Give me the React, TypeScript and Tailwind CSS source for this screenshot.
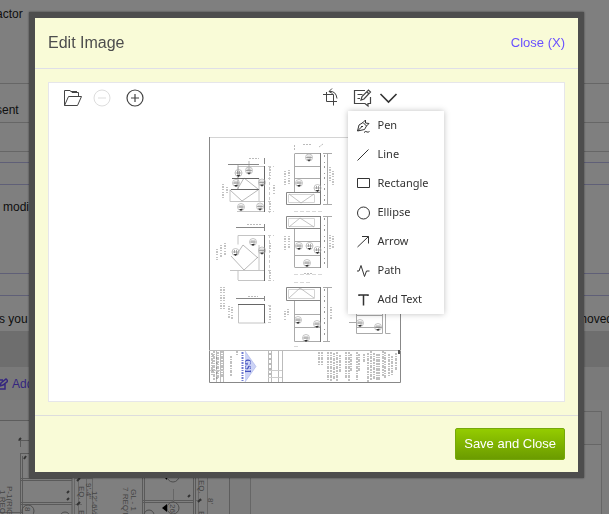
import type { ReactNode } from "react";

const Icon = ({children, size = 20, className = ""} : {children: ReactNode, size?: number, className?: string}) => {
    return (
        <svg width={size} height={size} viewBox={`0 0 ${size} ${size}`} fill="none" stroke="currentColor" strokeWidth="1" className={className} aria-hidden="true">
            {children}
        </svg>
    );
}

const tools = [
    {
        name: "Pen",
        icon: <path d="M2.500 13 4 7l4-2.500 3.500 3.500-2 3.500-7 1.500 4.500-4.500M8 4.500l2.500-2.500M11.500 8l2.500-2.500M10.500 2v3l3.500.5M6 8.500h2M9 14.500q2-2 3-.5 1 .5 2.500-.5" />,
    },
    {name: "Line", icon: <path d="M2.500 13.500l11-11" />},
    {name: "Rectangle", icon: <path d="M2.500 2.500h12v9h-12z" />},
    {name: "Ellipse", icon: <circle cx="8.500" cy="8" r="6" />},
    {name: "Arrow", icon: <path d="M2.500 13l11-10.500M7 2.500h6.500v7" />},
    {name: "Path", icon: <path d="M2 8h2l2-5.500 3.500 11 2-5.500h3" />},
    {name: "Add Text", icon: <path d="M4 4V3h9v1M8.500 3v10.500" strokeWidth="1.5" />},
];

const circles = [
    [40, 33.5], [29.5, 36], [27, 46], [53, 45.5], [32, 70], [51, 69.5],
    [44, 105], [26.5, 115], [53, 113.5],
    [100, 20.5], [90, 46], [108.5, 51], [90, 109], [100.5, 109], [108.5, 113],
    [98, 126], [89, 183], [108, 187], [97, 201], [151, 186], [169, 190],
];

// x, y1, y2 of every run of small sideways notes
const notes = [
    [14, 47, 61], [18, 50, 58], [65, 48, 58], [61, 30, 40], [61, 64, 75],
    [8, 112, 123], [12, 108, 121], [16, 106, 118], [61, 106, 116], [61, 133, 144],
    [12, 150, 173], [15, 150, 172], [20, 169, 182], [23, 170, 182], [61, 169, 185],
    [76, 34, 48], [80, 33, 48], [76, 99, 113], [80, 99, 112], [76, 174, 184], [79, 172, 180],
    [121, 30, 46], [124, 34, 48], [121, 98, 114], [124, 99, 111], [122, 170, 182],
];

const titleNotes = [
    [3, 216, 238], [5, 214, 244], [9, 215, 242], [13, 214, 240], [22, 219, 240], [28, 214, 218],
    [110, 215, 229], [113, 215, 228], [119, 215, 243], [122, 215, 245], [125, 216, 243], [128, 215, 245],
    [131, 218, 235], [137, 215, 242], [140, 215, 244], [142, 217, 235], [148, 215, 243], [150, 217, 234],
    [155, 217, 226], [159, 216, 245], [162, 214, 244], [165, 216, 243], [168, 217, 243], [170, 217, 243],
    [174, 214, 239], [176, 215, 242], [180, 217, 240], [183, 219, 238], [187, 216, 234],
];

const Drawing = () => {
    return (
        <svg width="192" height="246" viewBox="0 0 192 246" fill="none" role="img" aria-label="Shop drawing">
            <rect width="192" height="246" fill="#fff" />
            <path d="M0 .5h192" stroke="#d4d4d4" />
            <path d="M.5 0v245.500h191V0" stroke="#888" />
            <path d="M0 213.500h192" stroke="#bbb" />
            {/* left elevations */}
            <g stroke="#c4c4c4">
                <path d="M29 29.500h27M29 29.500v12M28 74.500h28M21 64.500h35M21 52.500v12M50 41.500v23M29 98.500h27M29 98.500v9M29 143.500h27M29 133v10M50 108v25M21 133.500h35M29.500 168v18h27" />
                <path d="M21 53l12 11 16-11M28 53l7-12 14 11M22 119l13 14 14-13M28 117l6-9 15 13M40 33v-9M29 27v25" stroke="#999" strokeWidth=".7" />
            </g>
            <path d="M55.500 29v46M55.500 98v46M55.500 167v19M29 167.500h27M22 52.500h28M23 41.500h27" stroke="#666" />
            <path d="M19 27.500h31M27 90.500h29M27 161.500h29M55.500 21v6M55.500 87v7M55.500 159v5" stroke="#888" />
            <path d="M59 29.500h6M59 41.500h4M59 64.500h4M59 74.500h6M59 98.500h6M59 133.500h4M59 143.500h6M59 168.500h3M59 185.500h3M60.500 30v46M60.500 98v46" stroke="#ccc" strokeDasharray="3 2" />
            {/* centre elevations */}
            <g stroke="#aaa">
                <path d="M85.500 16.500h26M85.500 29.500h26M85.500 41.500h26M85.500 17v38M85.500 92v38M85.500 104.500h26M85.500 118.500h26M85.500 130.500h26M85.500 164v40.500h26M85.500 177.500h26M85.500 190.500h26" />
                <path d="M77.500 55.500h34v12h-34zM77.500 79.500h34v12h-34zM77.500 150.500h34v13h-34z" stroke="#888" />
                <path d="M79.500 57.500h26v8h-26zM79.500 81.500h26v8h-26zM79.500 152.500h26v9h-26z" stroke="#d4d4d4" />
                <path d="M80 57l12 9 13-9M80 90l11-9 14 9M80 161l11-10 14 10" strokeWidth=".7" />
            </g>
            <path d="M111.500 16v51M111.500 79v52M111.500 150v55" stroke="#777" />
            <path d="M118.500 16v51M118.500 79v52M118.500 150v55M114 16.500h9M114 67.500h9M114 79.500h9M114 150.500h9M114 204.500h7" stroke="#aaa" />
            <path d="M115.500 18v48M115.500 81v48M115.500 152v50" stroke="#999" strokeDasharray="2 5 1 3" />
            <path d="M94 7.500h8M110 10l4-3M40 21.500h10M38 87.500h14M39 159.500h10M95 136.500h9M85.500 8v5" stroke="#bbb" strokeDasharray="2 1" />
            <path d="M85 74.500h28M85 137.500h28M85 145.500h16M85 209.500h5" stroke="#d8d8d8" strokeDasharray="4 2" />
            {/* right elevation */}
            <path d="M147.500 120v76.500h26V120M176.500 120v76.500h5M147 178.500h26M140 185.500h8M147 190.500h26" stroke="#aaa" />
            {circles.map(([x, y]) => (
                <g key={`${x}-${y}`}>
                    <circle cx={x} cy={y} r="3.5" stroke="#aaa" strokeWidth=".7" />
                    <path d={`M${x - 3} ${y}h6M${x - 1} ${y - 2}v3M${x + 1} ${y - 2}v4`} stroke="#888" strokeWidth=".7" />
                    <path d={`M${x - 2} ${y + 2}h4l-2 2z`} fill="#333" />
                </g>
            ))}
            {notes.map(([x, y1, y2]) => (
                <path key={`${x}-${y1}`} d={`M${x} ${y1}V${y2}`} stroke="#c4c4c4" strokeWidth="2" strokeDasharray="1 1 2 1 1 2" />
            ))}
            {/* title block */}
            <path d="M7.500 214v31M11.500 214v31M14.500 214v31M59.500 214v31M62.500 214v31M69.500 214v31M73.500 214v31" stroke="#bbb" />
            <path d="M1 233.500h14M59 233.500h14M59 240.500h14" stroke="#ccc" />
            <path d="M4 218v18M8 220v22M61 216v24" stroke="#777" strokeDasharray="2 3" />
            <path d="M36 214l11 15.500L36 245z" fill="#ccd3f6" />
            <path d="M36 214l11 15.500L36 245" stroke="#a6b0e8" strokeWidth=".6" />
            <text transform="translate(36 222) rotate(90)" fill="#4452bd" className="font-['Liberation_Serif',serif] text-[8px] font-bold">GSI</text>
            <path d="M33.500 215v30" stroke="#6f7bd0" strokeWidth="2" strokeDasharray="2 1 1 1" />
            {titleNotes.map(([x, y1, y2]) => (
                <path key={`${x}-${y1}`} d={`M${x} ${y1}V${y2}`} stroke="#c0c0c0" strokeWidth="2" strokeDasharray="2 1 1 1 3 1" />
            ))}
            <path d="M190 213v4" stroke="#555" strokeWidth="2" />
        </svg>
    );
}

const Thumbnail = () => {
    return (
        <svg width="229" height="93" viewBox="0 0 229 93" fill="none" stroke="#ccc" className="font-['Liberation_Sans',sans-serif] text-[8px]" aria-hidden="true">
            <path d="M20.500 17v9M18 19.500h54M20 32.500h52v61M20.500 33v60M22.500 35v58M20 57.500h52M20 59.500h52M20 81.500h52M20 83.500h52M0 91.500h22M142.500 20v73M144.500 20v73M142 79.500h52M142 81.500h52M193.500 20v73M195.500 20v73" stroke="#b4b4b4" />
            <path d="M74.500 20v73M78.500 20v73M86.500 20v73M92.500 20v73M198.500 20v73M207.500 20v73M173.500 68v14M74 57.500h18M74 83.500h8M196 79.500h6" />
            <g stroke="#999">
                <circle cx="28" cy="90" r="6" />
                <circle cx="65" cy="96" r="5" />
                <circle cx="149" cy="94" r="5" />
                <circle cx="173" cy="55" r="6" />
                <circle cx="173" cy="87" r="6" />
            </g>
            <path d="M167 83v8l-5-4zM167 53v6l-4-4z" fill="#000" stroke="none" />
            <path d="M19 19l2-2M24 38l2-3M67 72l2-2M67 79l2-2M77 60l3-3M77 84l3-3M188 76l2-2M198 81l3-3" stroke="#666" strokeWidth="2" />
            <g fill="#8a8a8a" stroke="none">
                <text transform="translate(7 65) rotate(90)">P-1(RIGHT)</text>
                <text transform="translate(0 69) rotate(90)">1 REQ'D</text>
                <text transform="translate(131 68) rotate(90)">GL - 1</text>
                <text transform="translate(123 66) rotate(90)">7 REQ'D</text>
                <text transform="translate(79 65) rotate(90)">EQ.</text>
                <text transform="translate(79 89) rotate(90)">EQ.</text>
                <text transform="translate(86 62) rotate(90)">9'-4"</text>
                <text transform="translate(92 70) rotate(90)">12'-6½</text>
                <text transform="translate(199 59) rotate(90)">EQ.</text>
                <text transform="translate(199 90) rotate(90)">EQ.</text>
                <text transform="translate(208 77) rotate(90)">8'</text>
                <text transform="translate(170 83) rotate(90)">26</text>
                <text transform="translate(25 86) rotate(90)">8</text>
            </g>
        </svg>
    );
}

const Background = () => {
    return (
        <div className="flex h-screen flex-col overflow-hidden bg-white text-xs leading-4 whitespace-nowrap text-[#222]">
            <div className="-ml-1 h-[84px] shrink-0 border-b border-[#ccc] pt-1.5">actor</div>
            <div className="h-[39px] shrink-0 border-b border-[#ccc] pt-[18px]">
                <div className="-ml-1">sent</div>
            </div>
            <div className="h-[29px] shrink-0 border-b border-[#ccc]" />
            <div className="h-[11px] shrink-0 border-b border-[#bfbfee]" />
            <div className="h-[22px] shrink-0 border-b border-[#bfbfee]" />
            <div className="h-[89px] shrink-0 border-b border-[#bfbfee] pt-3.5 pl-[3px]">modif</div>
            <div className="h-[22px] shrink-0 border-b border-[#bfbfee]" />
            <div className="flex h-[35px] shrink-0 justify-between pt-[15px]">
                <span className="-ml-px">s you</span>
                <span className="-mr-1">moved</span>
            </div>
            <div className="h-9 shrink-0 bg-[#dcdcdc]" />
            <div className="h-[33px] shrink-0 bg-[#f4f4f4] pt-[9px]">
                <a href="#add" className="-ml-1 flex items-center gap-1 text-[#6a4dff]">
                    <Icon size={12}>
                        <path d="M7 2H1v9h8V6M4 8l1-3 5-4 2 2-5 4z" strokeWidth="1.5" />
                    </Icon>
                    Add
                </a>
            </div>
            <div className="flex min-h-0 flex-1 bg-[#f8f8f8]">
                <div className="flex w-[230px] flex-col pt-5">
                    <div className="flex-1 border-t border-r border-[#bbb] bg-white">
                        <Thumbnail />
                    </div>
                </div>
                <div className="mr-[7px] ml-5 flex flex-1 flex-col pt-[11px]">
                    <div className="h-[34px] shrink-0 border border-[#ccc]" />
                    <div className="flex-1 border-x border-[#ccc] bg-white" />
                </div>
            </div>
        </div>
    );
}

const Toolbar = () => {
    return (
        <div className="relative flex h-[30px] items-center pl-3.5 text-[#444]">
            <button type="button" aria-label="Open">
                <Icon>
                    <path d="M1.500 17.500V2.500h5.500l2 2h6.500v4M1.500 17.500l4-9h13l-4 9zM7 2.500l1 1h6" />
                </Icon>
            </button>
            <button type="button" aria-label="Zoom out" disabled className="ml-[9px] text-[#ddd]">
                <Icon>
                    <circle cx="10" cy="10" r="8" />
                    <path d="M6 10h8" />
                </Icon>
            </button>
            <button type="button" aria-label="Zoom in" className="ml-[13px]">
                <Icon>
                    <circle cx="10" cy="10" r="8" strokeWidth="1.2" />
                    <path d="M6 10h8M10 6v8" strokeWidth="1.2" />
                </Icon>
            </button>
            <div className="absolute inset-y-0 left-1/2 ml-[13px] flex items-center">
                <button type="button" aria-label="Crop">
                    <Icon>
                        <path d="M3 6.500h10.500v11M6.500 4v9.500H17M9 3.500q7-1 8 7M12 .5 9 3.500l3.500 2" />
                    </Icon>
                </button>
                <button type="button" aria-label="Annotate" className="ml-3 flex items-center">
                    <Icon>
                        <path d="M13 2.500H2.500v13H13l3 2.500v-2.500h2.500V9M5.500 6.500h5M5.500 10.500h2.500M9 12l1-3.500 6.500-6.500 2 2-6.500 7zM15 4l2 2" strokeWidth="1.2" />
                    </Icon>
                    <Icon className="ml-1.5 text-[#333]">
                        <path d="M2.500 6l8 8 8-8" strokeWidth="1.6" />
                    </Icon>
                </button>
            </div>
        </div>
    );
}

const ToolMenu = () => {
    return (
        <ul className="absolute top-7 left-1/2 ml-[41px] w-24 bg-white font-['Noto_Sans',sans-serif] text-[11px] text-[#333] shadow-[0_0_6px_rgba(0,0,0,0.25)]">
            {tools.map(({name, icon}) => (
                <li key={name}>
                    <button type="button" className="flex h-[29px] w-full items-center gap-[7px] pl-[7px]">
                        <Icon size={16}>{icon}</Icon>
                        {name}
                    </button>
                </li>
            ))}
        </ul>
    );
}

export default function App() {
    return (
        <div className="font-['Liberation_Sans',sans-serif]">
            <Background />
            <div className="fixed inset-0 bg-black/50 pt-3 pr-[25px] pb-9 pl-[29px]">
                <div role="dialog" aria-labelledby="dialog-title" className="border-6 border-[#4d4d4d] bg-[#f9fbd7] shadow-[0_0_2px_rgba(0,0,0,0.5)]">
                    <div className="flex h-[51px] items-center justify-between border-b border-[#dfdfe8] px-[13px]">
                        <h1 id="dialog-title" className="text-base text-[#4d4d4d]">Edit Image</h1>
                        <a href="#close" className="text-[13px] text-[#6a50ff]">Close (X)</a>
                    </div>
                    <div className="px-[13px] py-[13px]">
                        <div className="relative border border-[#e6e6ea] bg-white pb-[18px]">
                            <Toolbar />
                            <div className="flex justify-center pt-6 pr-[3px]">
                                <Drawing />
                            </div>
                            <ToolMenu />
                        </div>
                    </div>
                    <div className="flex justify-end border-t border-[#ddd] px-[13px] py-3">
                        <button type="button" className="h-8 rounded-[2px] border border-[#76a80a] bg-linear-to-b from-[#94cc00] to-[#6b9b00] px-2 text-[13px] text-white">Save and Close</button>
                    </div>
                </div>
            </div>
        </div>
    );
}
